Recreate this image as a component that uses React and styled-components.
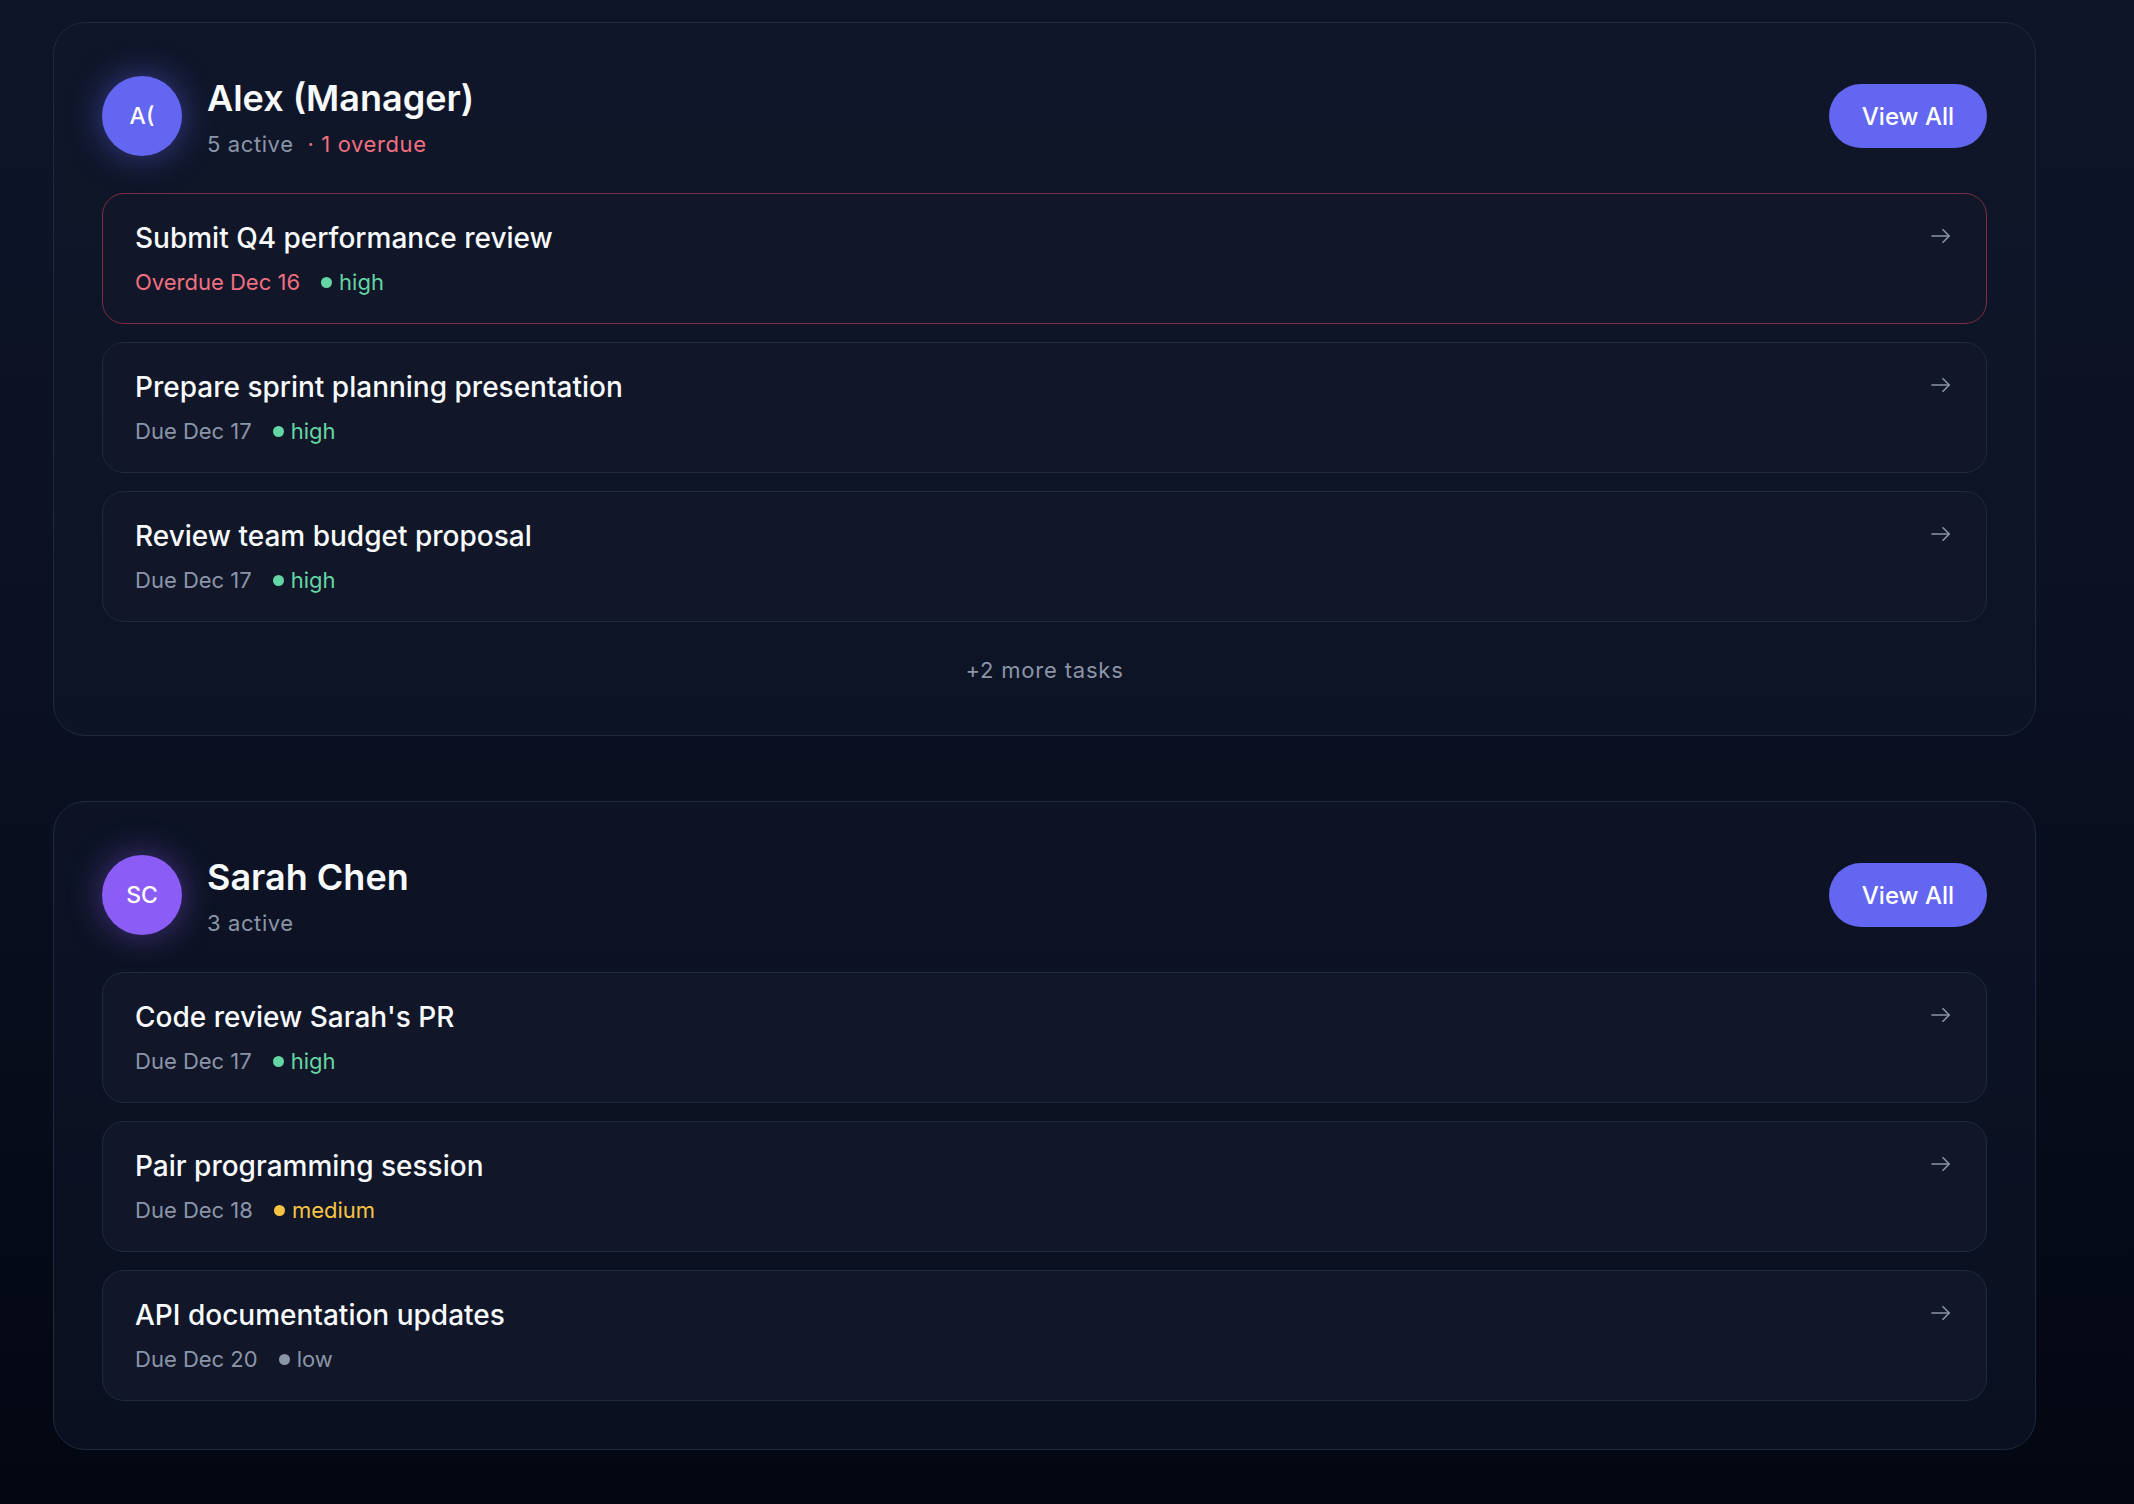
import React from "react";
import styled, { createGlobalStyle } from "styled-components";

const GlobalStyle = createGlobalStyle`
  html, body {
    margin: 0;
    padding: 0;
  }
  body {
    min-height: 100vh;
    background: linear-gradient(180deg, #0f1529 0%, #0a0f20 55%, #030712 100%);
    font-family: Inter, "Noto Sans", "Liberation Sans", sans-serif;
    color: #f8fafc;
  }
`;

const Page = styled.div`
  min-height: 1504px;
  box-sizing: border-box;
  padding: 22px 0 40px 53px;
  display: flex;
  flex-direction: column;
  gap: 65px;
`;

const Card = styled.section`
  width: 1983px;
  box-sizing: border-box;
  padding: 48px;
  border: 1px solid #1f2a3d;
  border-radius: 32px;
  background: rgba(17, 24, 42, 0.55);
  display: flex;
  flex-direction: column;
`;

const Header = styled.div`
  display: flex;
  align-items: center;
  justify-content: space-between;
  margin-bottom: 32px;
`;

const Person = styled.div`
  display: flex;
  align-items: center;
  gap: 25px;
`;

const Avatar = styled.div`
  width: 80px;
  height: 80px;
  border-radius: 50%;
  background: ${(p) => p.color};
  box-shadow: 0 0 34px ${(p) => p.glow};
  display: flex;
  align-items: center;
  justify-content: center;
  font-size: 23px;
  font-weight: 500;
  color: #ffffff;
`;

const Info = styled.div`
  display: flex;
  flex-direction: column;
`;

const Name = styled.h2`
  margin: 0;
  font-size: 36px;
  line-height: 1.5;
  font-weight: 600;
  color: #f8fafc;
`;

const Stats = styled.div`
  margin-top: 3px;
  font-size: 22px;
  line-height: 1.5;
  letter-spacing: 0.6px;
  color: #8b95a7;
  display: flex;
  gap: 14px;
`;

const Overdue = styled.span`
  color: #f06f80;
`;

const ViewAll = styled.button`
  height: 64px;
  padding: 0 33px;
  border: none;
  border-radius: 32px;
  background: #6366f1;
  color: #ffffff;
  font-family: inherit;
  font-size: 24px;
  font-weight: 500;
  cursor: pointer;
`;

const TaskList = styled.div`
  display: flex;
  flex-direction: column;
  gap: 18px;
`;

const Task = styled.div`
  box-sizing: border-box;
  height: 131px;
  padding: 23px 32px;
  border: 1px solid ${(p) => (p.overdue ? "#7d2c44" : "#1f2a3d")};
  border-radius: 22px;
  background: #111729;
  display: flex;
  justify-content: space-between;
  align-items: flex-start;
`;

const TaskBody = styled.div`
  display: flex;
  flex-direction: column;
  gap: 7px;
`;

const TaskTitle = styled.div`
  font-size: 28px;
  line-height: 1.5;
  font-weight: 500;
  color: #f8fafc;
`;

const Meta = styled.div`
  display: flex;
  align-items: center;
  gap: 21px;
  font-size: 22px;
  line-height: 1.5;
`;

const Due = styled.span`
  color: ${(p) => (p.overdue ? "#f06f80" : "#8b95a7")};
`;

const Priority = styled.span`
  display: flex;
  align-items: center;
  gap: 7px;
  color: ${(p) => p.color};

  &::before {
    content: "";
    width: 11px;
    height: 11px;
    border-radius: 50%;
    background: ${(p) => p.color};
  }
`;

const ArrowWrap = styled.div`
  margin-top: 11px;
  margin-right: 3px;
  color: #8b95a7;
  display: flex;
`;

const More = styled.div`
  padding-top: 32px;
  text-align: center;
  font-size: 22px;
  line-height: 1.5;
  letter-spacing: 0.8px;
  color: #8b95a7;
`;

const priorityColors = {
  high: "#64d6a3",
  medium: "#f6c443",
  low: "#8b95a7",
};

const people = [
  {
    initials: "A(",
    name: "Alex (Manager)",
    active: 5,
    overdue: 1,
    color: "#6366f1",
    glow: "rgba(99, 102, 241, 0.5)",
    more: 2,
    tasks: [
      { title: "Submit Q4 performance review", due: "Overdue Dec 16", overdue: true, priority: "high" },
      { title: "Prepare sprint planning presentation", due: "Due Dec 17", priority: "high" },
      { title: "Review team budget proposal", due: "Due Dec 17", priority: "high" },
    ],
  },
  {
    initials: "SC",
    name: "Sarah Chen",
    active: 3,
    overdue: 0,
    color: "#8b5cf6",
    glow: "rgba(139, 92, 246, 0.45)",
    more: 0,
    tasks: [
      { title: "Code review Sarah's PR", due: "Due Dec 17", priority: "high" },
      { title: "Pair programming session", due: "Due Dec 18", priority: "medium" },
      { title: "API documentation updates", due: "Due Dec 20", priority: "low" },
    ],
  },
];

function Arrow() {
  return (
    <svg width="20" height="16" viewBox="0 0 20 16" fill="none" stroke="currentColor" strokeWidth="1.6" strokeLinecap="round" strokeLinejoin="round">
      <path d="M1 8h17" />
      <path d="M12 1.8 18.2 8 12 14.2" />
    </svg>
  );
}

function PersonCard({ person }) {
  return (
    <Card>
      <Header>
        <Person>
          <Avatar color={person.color} glow={person.glow}>
            {person.initials}
          </Avatar>
          <Info>
            <Name>{person.name}</Name>
            <Stats>
              <span>{person.active} active</span>
              {person.overdue > 0 && <Overdue>· {person.overdue} overdue</Overdue>}
            </Stats>
          </Info>
        </Person>
        <ViewAll>View All</ViewAll>
      </Header>
      <TaskList>
        {person.tasks.map((t) => (
          <Task key={t.title} overdue={t.overdue}>
            <TaskBody>
              <TaskTitle>{t.title}</TaskTitle>
              <Meta>
                <Due overdue={t.overdue}>{t.due}</Due>
                <Priority color={priorityColors[t.priority]}>{t.priority}</Priority>
              </Meta>
            </TaskBody>
            <ArrowWrap>
              <Arrow />
            </ArrowWrap>
          </Task>
        ))}
      </TaskList>
      {person.more > 0 && <More>+{person.more} more tasks</More>}
    </Card>
  );
}

export default function App() {
  return (
    <>
      <GlobalStyle />
      <Page>
        {people.map((p) => (
          <PersonCard key={p.name} person={p} />
        ))}
      </Page>
    </>
  );
}
